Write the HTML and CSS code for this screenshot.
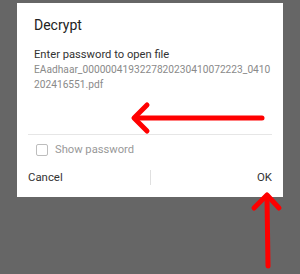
FILE: index.html
```html
<!DOCTYPE html>
<html>
<head>
	<title>Decrypt</title>
	<link rel="stylesheet" href="styles.css">
</head>
<body>
	<div class="dialog">
		<div class="dialog-title">Decrypt</div>
		<div class="dialog-message">Enter password to open file</div>
		<div class="dialog-file">EAadhaar_0000004193227820230410072223_0410<wbr>202416551.pdf</div>

		<div class="password-line"></div>

		<label class="show-password">
			<span class="checkbox"></span>
			<span>Show password</span>
		</label>

		<div class="dialog-buttons">
			<span class="btn btn-cancel">Cancel</span>
			<span class="btn-sep"></span>
			<span class="btn btn-ok">OK</span>
		</div>
	</div>

	<!-- red hint arrows drawn over the screenshot -->
	<svg class="arrows" width="300" height="274" viewBox="0 0 300 274">
		<g fill="none" stroke="#ff0000" stroke-width="5" stroke-linecap="round" stroke-linejoin="round">
			<line x1="262" y1="118" x2="136" y2="118"/>
			<polyline points="147,105 134,118 147,131"/>
			<line x1="268" y1="266" x2="267" y2="198"/>
			<polyline points="254,208 267,195 279,208"/>
		</g>
	</svg>
</body>
</html>
```

FILE: styles.css
```css
html, body {
	margin: 0;
	padding: 0;
}
body {
	background-color: #666666;
	font-family: Roboto, "Noto Sans", sans-serif;
	padding: 3px 17px 0 17px;
	height: 274px;
	box-sizing: border-box;
}
.dialog {
	background-color: #ffffff;
	display: flex;
	flex-direction: column;
	padding: 14px 10px 12px 17px;
	height: 194px;
	box-sizing: border-box;
}
.dialog-title {
	font-size: 14px;
	line-height: 17px;
	color: #222222;
}
.dialog-message {
	margin-top: 14px;
	font-size: 11.2px;
	line-height: 14px;
	color: #333333;
}
.dialog-file {
	font-size: 10.2px;
	line-height: 15px;
	color: #8a8a8a;
}
.password-line {
	margin: auto 1px 0 -6px;
	height: 1px;
	background-color: #e6e6e6;
}
.show-password {
	display: flex;
	align-items: center;
	gap: 7px;
	margin-top: 8px;
	padding-left: 2px;
	font-size: 11.2px;
	line-height: 14px;
	color: #999999;
}
.checkbox {
	width: 10px;
	height: 10px;
	border: 1px solid #bdbdbd;
	border-radius: 2px;
}
.dialog-buttons {
	display: flex;
	align-items: center;
	margin: 13px 1px 0 -6px;
	font-size: 11.4px;
	line-height: 15px;
	color: #333333;
}
.btn {
	flex: 1;
}
.btn-ok {
	text-align: right;
}
.btn-sep {
	width: 1px;
	height: 15px;
	background-color: #e0e0e0;
}
.arrows {
	position: absolute;
	left: 0;
	top: 0;
}
```
